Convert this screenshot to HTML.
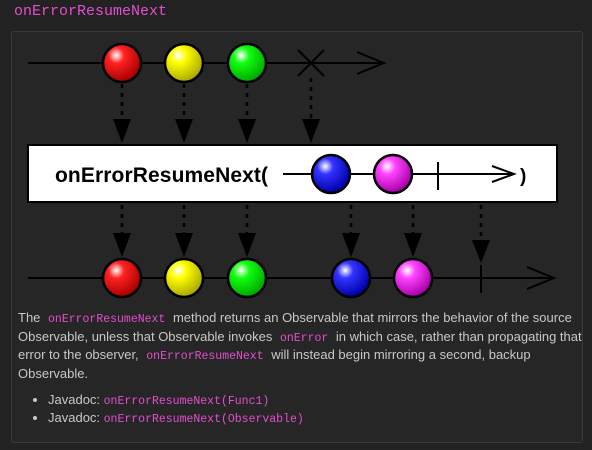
<!DOCTYPE html>
<html><head><style>
body{margin:0;background:#222;width:592px;height:450px;overflow:hidden;font-family:"Liberation Sans",sans-serif;color:#c8c8c8}
h1{position:absolute;left:14px;top:3px;margin:0;font:15px "Liberation Mono",monospace;color:#e44ed0;font-weight:normal}
.box{position:absolute;left:11px;top:31px;width:570px;height:410px;border:1px solid #3a3a3a;border-radius:3px;background:#262626}
code{font-family:"Liberation Mono",monospace;font-size:11.5px;line-height:1;color:#e44ed0;padding:0 4px}
p{position:absolute;left:18px;top:309px;width:570px;margin:0;font-size:13px;line-height:18.5px}
ul{position:absolute;left:18px;top:391px;margin:0;padding-left:30px;font-size:13px;line-height:18px}
</style></head><body>
<h1>onErrorResumeNext</h1>
<div class="box"></div>
<svg width="592" height="300" style="position:absolute;left:0;top:0">
<defs>
<radialGradient id="r" cx="35%" cy="30%" r="70%"><stop offset="0" stop-color="#fff"/><stop offset=".3" stop-color="#f22"/><stop offset="1" stop-color="#a00"/></radialGradient>
<radialGradient id="y" cx="35%" cy="30%" r="70%"><stop offset="0" stop-color="#fff"/><stop offset=".3" stop-color="#ff0"/><stop offset="1" stop-color="#aa0"/></radialGradient>
<radialGradient id="g" cx="35%" cy="30%" r="70%"><stop offset="0" stop-color="#fff"/><stop offset=".3" stop-color="#1f1"/><stop offset="1" stop-color="#0a0"/></radialGradient>
<radialGradient id="b" cx="35%" cy="30%" r="70%"><stop offset="0" stop-color="#fff"/><stop offset=".3" stop-color="#33f"/><stop offset="1" stop-color="#00a"/></radialGradient>
<radialGradient id="p" cx="35%" cy="30%" r="70%"><stop offset="0" stop-color="#fff"/><stop offset=".3" stop-color="#f4f"/><stop offset="1" stop-color="#a0a"/></radialGradient>
</defs>
<g stroke="#000" stroke-width="2" fill="none">
<line x1="28" y1="63" x2="384" y2="63"/><polyline points="357,52 384,63 357,74"/>
<line x1="298" y1="50" x2="324" y2="76"/><line x1="324" y1="50" x2="298" y2="76"/>
<g stroke-dasharray="4,5" stroke-width="2.5">
<line x1="122" y1="84" x2="122" y2="120"/><line x1="184" y1="84" x2="184" y2="120"/><line x1="247" y1="84" x2="247" y2="120"/><line x1="311" y1="78" x2="311" y2="120"/>
<line x1="122" y1="205" x2="122" y2="234"/><line x1="184" y1="205" x2="184" y2="234"/><line x1="247" y1="205" x2="247" y2="234"/><line x1="351" y1="205" x2="351" y2="234"/><line x1="413" y1="205" x2="413" y2="234"/><line x1="481" y1="205" x2="481" y2="240"/>
</g>
<line x1="28" y1="278" x2="554" y2="278"/><polyline points="527,267 554,278 527,289"/>
<line x1="481" y1="265" x2="481" y2="293"/>
</g>
<g fill="#000">
<polygon points="113,119 131,119 122,143"/><polygon points="175,119 193,119 184,143"/><polygon points="238,119 256,119 247,143"/><polygon points="302,119 320,119 311,143"/>
<polygon points="113,233 131,233 122,257"/><polygon points="175,233 193,233 184,257"/><polygon points="238,233 256,233 247,257"/><polygon points="342,233 360,233 351,257"/><polygon points="404,233 422,233 413,257"/><polygon points="472,240 490,240 481,263"/>
</g>
<rect x="28" y="145" width="529" height="57" fill="#fff" stroke="#000" stroke-width="2"/>
<text x="55" y="182" font-family="Liberation Sans" font-weight="bold" font-size="21" textLength="213" fill="#000">onErrorResumeNext(</text>
<text x="520" y="182" font-family="Liberation Sans" font-weight="bold" font-size="19" fill="#000">)</text>
<g stroke="#000" stroke-width="2" fill="none">
<line x1="283" y1="174" x2="514" y2="174"/><polyline points="492,166 514,174 492,182"/><line x1="438" y1="162" x2="438" y2="190"/>
</g>
<g stroke="#000" stroke-width="2.5">
<circle cx="122" cy="63" r="19" fill="url(#r)"/><circle cx="184" cy="63" r="19" fill="url(#y)"/><circle cx="247" cy="63" r="19" fill="url(#g)"/>
<circle cx="331" cy="174" r="19" fill="url(#b)"/><circle cx="393" cy="174" r="19" fill="url(#p)"/>
<circle cx="122" cy="278" r="19" fill="url(#r)"/><circle cx="184" cy="278" r="19" fill="url(#y)"/><circle cx="247" cy="278" r="19" fill="url(#g)"/><circle cx="351" cy="278" r="19" fill="url(#b)"/><circle cx="413" cy="278" r="19" fill="url(#p)"/>
</g>
</svg>
<p>The <code>onErrorResumeNext</code> method returns an Observable that mirrors the behavior of the source Observable, unless that Observable invokes <code>onError</code> in which case, rather than propagating that error to the observer, <code>onErrorResumeNext</code> will instead begin mirroring a second, backup Observable.</p>
<ul><li>Javadoc: <code style="padding:0">onErrorResumeNext(Func1)</code></li><li>Javadoc: <code style="padding:0">onErrorResumeNext(Observable)</code></li></ul>
</body></html>
